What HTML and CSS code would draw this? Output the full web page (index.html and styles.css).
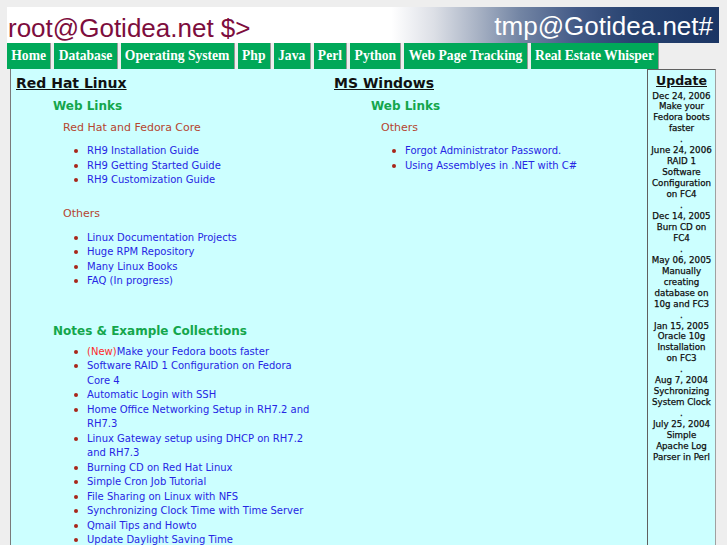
FILE: index.html
```html
<!DOCTYPE html>
<html lang="en">
<head>
<meta charset="utf-8">
<title>root@Gotidea.net</title>
<link rel="stylesheet" href="styles.css">
</head>
<body>
<div class="page">
  <header class="banner">
    <span class="brand brand-left">root@Gotidea.net $&gt;</span>
    <span class="brand brand-right">tmp@Gotidea.net#</span>
  </header>
  <nav class="nav">
    <a class="tab" href="#">Home</a>
    <a class="tab" href="#">Database</a>
    <a class="tab" href="#">Operating System</a>
    <a class="tab" href="#">Php</a>
    <a class="tab" href="#">Java</a>
    <a class="tab" href="#">Perl</a>
    <a class="tab" href="#">Python</a>
    <a class="tab" href="#">Web Page Tracking</a>
    <a class="tab" href="#">Real Estate Whisper</a>
  </nav>
  <div class="content">
    <main class="main">
      <section class="col">
        <h2 class="col-title">Red Hat Linux</h2>
        <h3 class="grp">Web Links</h3>
        <h4 class="sub">Red Hat and Fedora Core</h4>
        <ul class="links">
          <li><a href="#">RH9 Installation Guide</a></li>
          <li><a href="#">RH9 Getting Started Guide</a></li>
          <li><a href="#">RH9 Customization Guide</a></li>
        </ul>
        <h4 class="sub sub-gap">Others</h4>
        <ul class="links">
          <li><a href="#">Linux Documentation Projects</a></li>
          <li><a href="#">Huge RPM Repository</a></li>
          <li><a href="#">Many Linux Books</a></li>
          <li><a href="#">FAQ (In progress)</a></li>
        </ul>
        <h3 class="grp grp-gap">Notes &amp; Example Collections</h3>
        <ul class="links links-tight">
          <li><span class="new">(New)</span><a href="#">Make your Fedora boots faster</a></li>
          <li><a href="#">Software RAID 1 Configuration on Fedora Core 4</a></li>
          <li><a href="#">Automatic Login with SSH</a></li>
          <li><a href="#">Home Office Networking Setup in RH7.2 and RH7.3</a></li>
          <li><a href="#">Linux Gateway setup using DHCP on RH7.2 and RH7.3</a></li>
          <li><a href="#">Burning CD on Red Hat Linux</a></li>
          <li><a href="#">Simple Cron Job Tutorial</a></li>
          <li><a href="#">File Sharing on Linux with NFS</a></li>
          <li><a href="#">Synchronizing Clock Time with Time Server</a></li>
          <li><a href="#">Qmail Tips and Howto</a></li>
          <li><a href="#">Update Daylight Saving Time</a></li>
        </ul>
      </section>
      <section class="col">
        <h2 class="col-title">MS Windows</h2>
        <h3 class="grp">Web Links</h3>
        <h4 class="sub">Others</h4>
        <ul class="links">
          <li><a href="#">Forgot Administrator Password.</a></li>
          <li><a href="#">Using Assemblyes in .NET with C#</a></li>
        </ul>
      </section>
    </main>
    <aside class="side">
      <h2 class="side-title">Update</h2>
      <div class="updates">
        <p class="upd">Dec 24, 2006<br>Make your<br>Fedora boots<br>faster</p>
        <p class="sep">.</p>
        <p class="upd">June 24, 2006<br>RAID 1<br>Software<br>Configuration<br>on FC4</p>
        <p class="sep">.</p>
        <p class="upd">Dec 14, 2005<br>Burn CD on<br>FC4</p>
        <p class="sep">.</p>
        <p class="upd">May 06, 2005<br>Manually<br>creating<br>database on<br>10g and FC3</p>
        <p class="sep">.</p>
        <p class="upd">Jan 15, 2005<br>Oracle 10g<br>Installation<br>on FC3</p>
        <p class="sep">.</p>
        <p class="upd">Aug 7, 2004<br>Sychronizing<br>System Clock</p>
        <p class="sep">.</p>
        <p class="upd">July 25, 2004<br>Simple<br>Apache Log<br>Parser in Perl</p>
      </div>
    </aside>
  </div>
</div>
</body>
</html>
```

FILE: styles.css
```css
html, body {
  margin: 0;
  padding: 0;
  background: #eeeeee;
}

.page {
  padding: 7px 0 0 7px;
  font-family: "DejaVu Sans", Verdana, sans-serif;
}

/* ---------- banner ---------- */
.banner {
  width: 712px;
  height: 36px;
  display: flex;
  justify-content: space-between;
  align-items: flex-start;
  background: linear-gradient(to right,
    #ffffff 0%,
    #ffffff 54%,
    #dcdfe6 60%,
    #a9b3c5 66%,
    #7385a4 72%,
    #435a87 80%,
    #27426f 88%,
    #1b3564 100%);
  font-family: "Liberation Sans", Arial, sans-serif;
  font-size: 26px;
  line-height: 30px;
  white-space: nowrap;
}

.brand-left {
  color: #7d0d3d;
  padding: 6px 0 0 1px;
}

.brand-right {
  color: #ffffff;
  padding: 4px 6px 0 0;
}

/* ---------- nav ---------- */
.nav {
  display: flex;
  height: 26px;
}

.tab {
  display: flex;
  align-items: center;
  padding: 0 4.3px;
  margin-right: 3px;
  background: #00a859;
  border-right: 1px solid #9a9a9a;
  color: #ffffff;
  font-family: "Liberation Serif", "Times New Roman", serif;
  font-weight: bold;
  font-size: 13.6px;
  text-decoration: none;
  white-space: nowrap;
}

/* ---------- content ---------- */
.content {
  display: flex;
  margin-left: 3px;
  width: 706px;
  min-height: 520px;
}

.main {
  width: 636px;
  border-left: 1px solid #7a7a7a;
  background: #ccffff;
  display: grid;
  grid-template-columns: 318px 318px;
  align-items: start;
}

.col {
  padding: 5px 11px 0 5px;
}

.col-title {
  margin: 0;
  font-size: 14px;
  line-height: 18px;
  font-weight: bold;
  color: #111111;
  text-decoration: underline;
}

.grp {
  margin: 5.5px 0 0 37px;
  font-size: 12px;
  line-height: 16px;
  font-weight: bold;
  color: #14a64c;
}

.grp-gap {
  margin-top: 34.5px;
}

.sub {
  margin: 7px 0 0 47px;
  font-size: 11px;
  line-height: 14px;
  font-weight: normal;
  color: #b5452f;
}

.sub-gap {
  margin-top: 19.5px;
}

.links {
  list-style: none;
  margin: 9.5px 0 0 0;
  padding: 0 0 0 71px;
  font-size: 10px;
  line-height: 14.5px;
}

.links-tight {
  margin-top: 5.5px;
}

.links li::before {
  content: "";
  display: inline-block;
  width: 4px;
  height: 4px;
  border-radius: 50%;
  background: #a8261a;
  margin-left: -13px;
  margin-right: 9px;
  vertical-align: middle;
}

.links a {
  color: #2626e4;
  text-decoration: none;
}

.new {
  color: #ff2a2a;
}

/* ---------- sidebar ---------- */
.side {
  width: 67px;
  background: #ccffff;
  border-left: 1px solid #606060;
  border-top: 1px solid #606060;
  border-right: 1px solid #a0a0a0;
  padding-top: 3px;
  text-align: center;
  color: #111111;
}

.side-title {
  margin: 0;
  font-size: 12.5px;
  line-height: 16px;
  font-weight: bold;
  text-decoration: underline;
  color: #111111;
}

.updates {
  margin-top: 1.5px;
  font-size: 8.7px;
  line-height: 10.95px;
  white-space: nowrap;
  color: #000000;
  -webkit-text-stroke: 0.25px #222222;
}

.upd,
.sep {
  margin: 0;
}
```
